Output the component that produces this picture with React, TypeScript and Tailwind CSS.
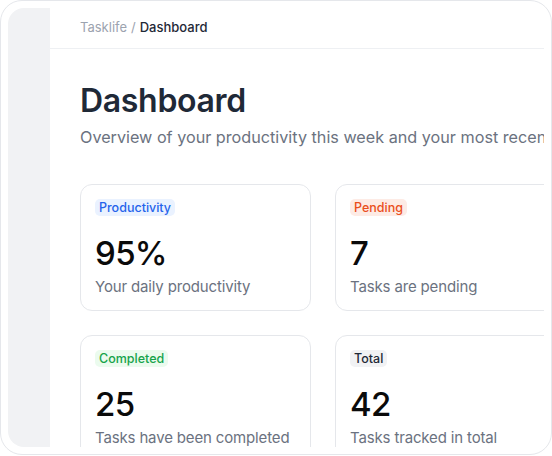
import React from "react";

const cards = [
  { label: "Productivity", badge: "bg-[#eaf2ff] text-[#2563eb]", value: "95%", desc: "Your daily productivity" },
  { label: "Pending", badge: "bg-[#fdebe5] text-[#ea4f1c]", value: "7", desc: "Tasks are pending" },
  { label: "Completed", badge: "bg-[#ebfbee] text-[#16a34a]", value: "25", desc: "Tasks have been completed" },
  { label: "Total", badge: "bg-[#f1f2f4] text-[#1f2937]", value: "42", desc: "Tasks tracked in total" },
];

export default function App() {
  return (
    <div className="w-[552px] h-[456px] bg-white font-['Inter',sans-serif]">
      <div className="w-[552px] h-[455px] rounded-[22px] border border-[#e5e7eb] p-[7px] flex overflow-hidden">
        <div className="w-[42px] shrink-0 bg-[#f1f2f4] rounded-l-[16px]" />
        <div className="flex-1 flex flex-col overflow-hidden">
          <div className="h-[41px] shrink-0 border-b border-[#eef0f3] px-[30px] flex items-center text-[13px] pb-[1px]">
            <span className="text-[#9ca3af]">Tasklife</span>
            <span className="text-[#9ca3af] mx-[4px]">/</span>
            <span className="text-[#1f2937] font-medium">Dashboard</span>
          </div>
          <div className="pl-[30px] pt-8 flex-1 overflow-hidden">
            <h1 className="text-[32px] leading-[40px] font-semibold text-[#1f2937] tracking-[-0.01em]">Dashboard</h1>
            <p className="text-[16.2px] leading-[24px] text-[#6b7280] whitespace-nowrap mt-[4px]">
              Overview of your productivity this week and your most recent tasks.
            </p>
            <div className="grid grid-cols-[231px_231px] gap-6 mt-[35px]">
              {cards.map((c) => (
                <div key={c.label} className="rounded-xl border border-[#e5e7eb] bg-white pt-[14px] pb-3 px-[14px]">
                  <div className="flex">
                    <span className={`block rounded-[5px] px-1 text-[12.5px] leading-[17px] font-medium ${c.badge}`}>
                      {c.label}
                    </span>
                  </div>
                  <div className="mt-[17px] text-[33px] leading-[40px] font-medium text-[#0a0a0a] tracking-[-0.02em]">{c.value}</div>
                  <div className="mt-[3px] text-[15px] leading-[22px] text-[#6b7280] whitespace-nowrap tracking-[-0.01em]">{c.desc}</div>
                </div>
              ))}
            </div>
          </div>
        </div>
      </div>
    </div>
  );
}
